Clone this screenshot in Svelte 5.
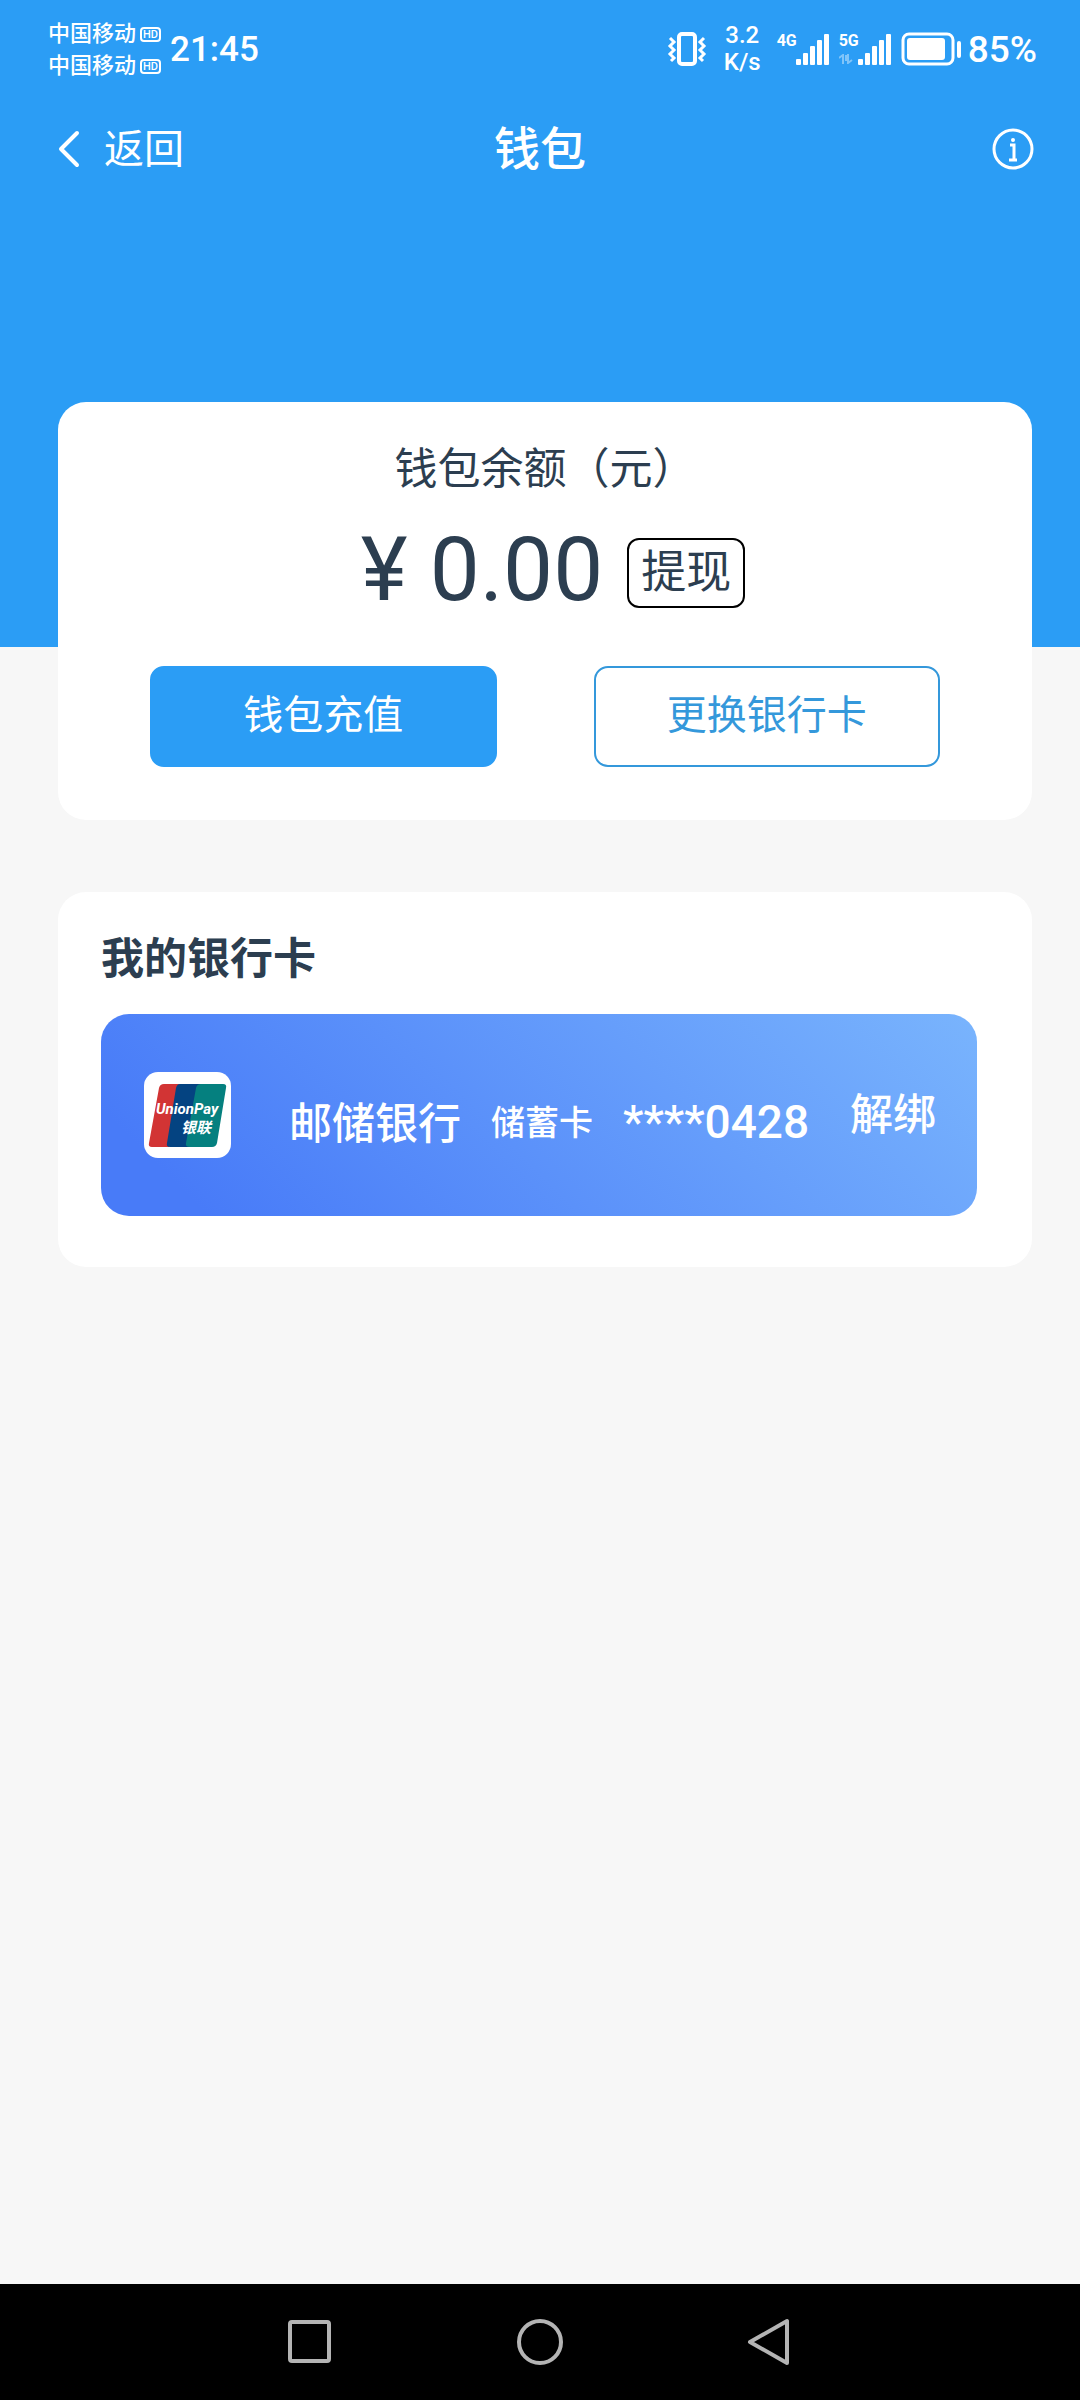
<script>
  const carriers = ['中国移动', '中国移动'];
  const signals = [
    { label: '4G', transfer: false },
    { label: '5G', transfer: true }
  ];
  const bars = [6, 12, 19, 25, 31];
  const account = { balance: '0.00' };
  const cards = [{ bank: '邮储银行', kind: '储蓄卡', number: '****0428' }];
</script>

<div class="screen">
  <header class="hero">
    <div class="status">
      <div class="carriers">
        {#each carriers as name}
          <div class="carrier"><span>{name}</span><span class="hd">HD</span></div>
        {/each}
      </div>
      <time class="clock">21:45</time>
      <div class="indicators">
        <svg class="vibrate" viewBox="0 0 40 36" width="40" height="36" fill="none" stroke="currentColor">
          <rect x="12" y="3" width="16" height="30" rx="3" stroke-width="4" />
          <path d="M3 7l4 4-4 4 4 4-4 4 4 4-3 3M37 7l-4 4 4 4-4 4 4 4-4 4 3 3" stroke-width="3" />
        </svg>
        <div class="speed"><span>3.2</span><span>K/s</span></div>
        {#each signals as signal}
          <div class="signal">
            <div class="network">
              <span>{signal.label}</span>
              {#if signal.transfer}
                <svg viewBox="0 0 14 10" width="14" height="10" fill="none" stroke="currentColor" stroke-width="2" opacity="0.4">
                  <path d="M0 4l4-3v9M9 0v9l4-3M7 1v6" />
                </svg>
              {/if}
            </div>
            <svg viewBox="0 0 33 32" width="33" height="32" fill="currentColor">
              {#each bars as height, i}
                <rect x={i * 7} y={32 - height} width="5" {height} rx="1" />
              {/each}
            </svg>
          </div>
        {/each}
        <svg class="battery" viewBox="0 0 60 34" width="60" height="34">
          <rect x="2" y="2" width="50" height="30" rx="6" fill="none" stroke="currentColor" stroke-width="3" />
          <rect x="6" y="6" width="38" height="22" rx="3" fill="currentColor" />
          <rect x="56" y="9" width="4" height="17" rx="2" fill="currentColor" />
        </svg>
        <span class="percent">85%</span>
      </div>
    </div>

    <nav class="titlebar">
      <button class="back" type="button">
        <svg viewBox="0 0 22 38" width="22" height="38" fill="none" stroke="currentColor" stroke-width="4" stroke-linecap="round" stroke-linejoin="round">
          <path d="M19 3L3 19l16 16" />
        </svg>
        <span>返回</span>
      </button>
      <h1>钱包</h1>
      <button class="info" type="button" aria-label="说明">
        <svg viewBox="0 0 42 42" width="42" height="42" fill="none" stroke="currentColor">
          <circle cx="21" cy="21" r="19" stroke-width="3" />
          <circle cx="21" cy="12" r="2" fill="currentColor" stroke="none" />
          <path d="M18 17h4v14M17 32h8" stroke-width="3" />
        </svg>
      </button>
    </nav>
  </header>

  <main>
    <section class="panel balance">
      <h2>钱包余额（元）</h2>
      <div class="amount">
        <span class="value">¥ {account.balance}</span>
        <button class="withdraw" type="button">提现</button>
      </div>
      <div class="actions">
        <button class="action primary" type="button">钱包充值</button>
        <button class="action outline" type="button">更换银行卡</button>
      </div>
    </section>

    <section class="panel wallet">
      <h2>我的银行卡</h2>
      {#each cards as card}
        <article class="bankcard">
          <svg class="logo" viewBox="0 0 87 86" width="87" height="86" role="img" aria-label="银联">
            <rect width="87" height="86" rx="14" fill="#fff" />
            <path d="M20 12H36L25 75H8Q4 75 5 71L15 16Q16 12 20 12Z" fill="#d23434" />
            <path d="M36 12H57L46 75H26Q22 75 23 71L32 16Q33 12 36 12Z" fill="#044381" />
            <path d="M57 12H79Q83 12 82 16L73 71Q72 75 68 75H46Q41 75 42 71L52 16Q53 12 57 12Z" fill="#05807f" />
            <text class="logo-en" x="12" y="42">UnionPay</text>
            <text class="logo-cn" x="37" y="61">银联</text>
          </svg>
          <div class="details">
            <span class="bank">{card.bank}</span>
            <span class="kind">{card.kind}</span>
            <span class="number">{card.number}</span>
          </div>
          <button class="unbind" type="button">解绑</button>
        </article>
      {/each}
    </section>
  </main>

  <footer class="softkeys">
    <button type="button" aria-label="最近任务">
      <svg viewBox="0 0 48 48" width="48" height="48"><rect x="4" y="4" width="39" height="39" rx="2" /></svg>
    </button>
    <button type="button" aria-label="主页">
      <svg viewBox="0 0 48 48" width="48" height="48"><circle cx="24" cy="24" r="21" /></svg>
    </button>
    <button type="button" aria-label="后退">
      <svg viewBox="0 0 48 48" width="48" height="48"><path d="M4 24L41 3V45Z" /></svg>
    </button>
  </footer>
</div>

<style>
  :global(body) {
    margin: 0;
    background: #f7f7f7;
  }
  .screen {
    display: flex;
    flex-direction: column;
    min-height: 100vh;
    color: #2c3e50;
    font-family: 'Noto Sans CJK SC', sans-serif;
  }
  button {
    margin: 0;
    padding: 0;
    border: 0;
    background: none;
    color: inherit;
    font: inherit;
    cursor: pointer;
  }
  svg {
    display: block;
    flex: none;
  }
  h1,
  h2 {
    margin: 0;
  }

  .hero {
    min-height: 647px;
    background: #2b9df5;
    color: #fff;
  }
  .status {
    display: flex;
    align-items: center;
    height: 98px;
    padding: 0 43px 0 48px;
    font-family: Roboto, 'Noto Sans CJK SC', sans-serif;
    font-weight: 500;
  }
  .carriers {
    padding-top: 2px;
  }
  .carrier {
    display: flex;
    align-items: center;
    gap: 4px;
    font-size: 22px;
    line-height: 32px;
  }
  .hd {
    padding: 0 1px;
    border: 2px solid;
    border-radius: 4px;
    font-size: 11px;
    line-height: 11px;
  }
  .clock {
    margin-left: 9px;
    font-size: 35px;
  }
  .indicators {
    display: flex;
    align-items: center;
    margin-left: auto;
  }
  .speed {
    display: flex;
    flex-direction: column;
    align-items: center;
    margin: 0 16px 0 17px;
    font-size: 24px;
    line-height: 27px;
  }
  .signal {
    display: flex;
    align-items: flex-start;
    margin-right: 10px;
  }
  .network {
    width: 19px;
    font-size: 16px;
    font-weight: 700;
    line-height: 16px;
  }
  .network svg {
    margin-top: 5px;
  }
  .percent {
    margin-left: 7px;
    font-size: 37px;
  }

  .titlebar {
    display: grid;
    grid-template-columns: 1fr auto 1fr;
    align-items: center;
    height: 102px;
    padding: 0 46px;
  }
  .back {
    display: flex;
    align-items: center;
    gap: 24px;
    margin-left: 12px;
    font-size: 40px;
    line-height: 48px;
  }
  .back span {
    padding-bottom: 6px;
  }
  h1 {
    padding-bottom: 8px;
    font-size: 46px;
    font-weight: 500;
    line-height: 56px;
  }
  .info {
    justify-self: end;
  }

  main {
    flex: 1;
    display: flex;
    flex-direction: column;
    gap: 72px;
    margin-top: -245px;
    padding: 0 48px 72px 58px;
  }
  .panel {
    border-radius: 28px;
    background: #fff;
  }
  h2 {
    font-size: 43px;
    line-height: 60px;
  }
  .balance {
    padding: 33px 92px 53px;
  }
  .balance h2 {
    font-weight: 400;
    text-align: center;
  }
  .amount {
    display: flex;
    align-items: center;
    justify-content: center;
    gap: 24px;
    height: 140px;
    margin-top: 3px;
    padding-left: 16px;
  }
  .value {
    padding-top: 4px;
    font-family: Roboto, sans-serif;
    font-size: 89px;
    line-height: 100px;
  }
  .withdraw {
    margin-top: 10px;
    padding: 0 12px 8px;
    border: 2px solid #000;
    border-radius: 12px;
    font-size: 45px;
    line-height: 58px;
  }
  .actions {
    display: grid;
    grid-template-columns: 1fr 1fr;
    gap: 97px;
    margin-top: 28px;
  }
  .action {
    padding-bottom: 8px;
    border: 2px solid #3498db;
    border-radius: 14px;
    font-size: 40px;
    line-height: 89px;
  }
  .primary {
    border-color: #2b9df5;
    background: #2b9df5;
    color: #fff;
  }
  .outline {
    color: #3498db;
  }

  .wallet {
    padding: 33px 55px 51px 43px;
  }
  .wallet h2 {
    font-weight: 700;
  }
  .bankcard {
    display: flex;
    align-items: center;
    height: 202px;
    margin-top: 29px;
    padding: 0 41px 0 43px;
    border-radius: 28px;
    background: linear-gradient(45deg, #487bf8 10%, #79b4fd);
    color: #fff;
    font-size: 43px;
    font-weight: 500;
    white-space: nowrap;
  }
  .details {
    display: flex;
    align-items: center;
    gap: 30px;
    margin-left: 58px;
    padding-top: 10px;
  }
  .kind {
    font-size: 34px;
  }
  .number {
    padding-top: 4px;
    font-family: Roboto, sans-serif;
    font-size: 46px;
  }
  .unbind {
    margin-left: auto;
    padding-bottom: 8px;
  }
  .logo-en,
  .logo-cn {
    fill: #fff;
    font-style: italic;
    font-weight: 700;
  }
  .logo-en {
    font-family: Roboto, sans-serif;
    font-size: 15px;
  }
  .logo-cn {
    font-size: 15px;
  }

  .softkeys {
    display: flex;
    align-items: center;
    justify-content: center;
    gap: 182px;
    height: 116px;
    background: #000;
  }
  .softkeys svg {
    fill: none;
    stroke: #b4b4b4;
    stroke-width: 4;
    stroke-linejoin: round;
  }
</style>
